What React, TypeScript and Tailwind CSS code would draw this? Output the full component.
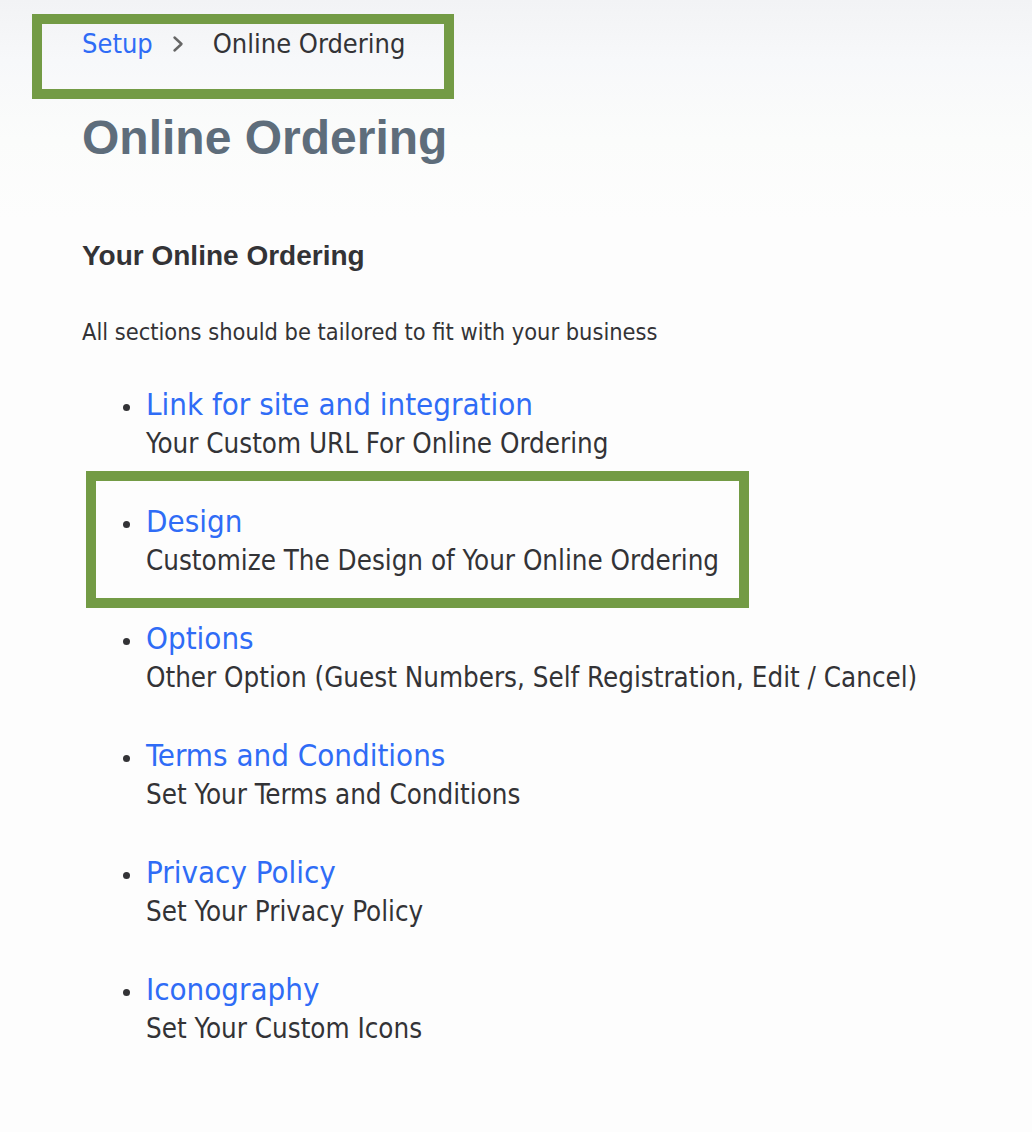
import React from "react";

const items = [
  { title: "Link for site and integration", desc: "Your Custom URL For Online Ordering" },
  { title: "Design", desc: "Customize The Design of Your Online Ordering" },
  { title: "Options", desc: "Other Option (Guest Numbers, Self Registration, Edit / Cancel)" },
  { title: "Terms and Conditions", desc: "Set Your Terms and Conditions" },
  { title: "Privacy Policy", desc: "Set Your Privacy Policy" },
  { title: "Iconography", desc: "Set Your Custom Icons" },
];

const body = { fontFamily: '"DejaVu Sans Condensed", "DejaVu Sans", sans-serif' };
const head = { fontFamily: '"Liberation Sans", Arial, sans-serif' };

export default function App() {
  return (
    <div className="relative min-h-[1132px] w-full bg-[linear-gradient(to_bottom,#f2f3f5_0px,#f7f8fa_60px,#fbfcfb_140px,#fdfdfd_220px,#fdfdfd_100%)] text-[#333336]">
      <div className="pl-[82px] pt-[28px]">
        <nav className="flex h-[32px] items-center text-[27px] leading-[32px]" style={body}>
          <a className="text-[#2f6cf6]">Setup</a>
          <svg className="ml-[19px] mr-[29px]" width="12" height="20" viewBox="0 0 12 20" fill="none">
            <path d="M2.5 3.5l7 6.5-7 6.5" stroke="#666" strokeWidth="2.4" strokeLinecap="round" strokeLinejoin="round" />
          </svg>
          <span className="text-[#333336]">Online Ordering</span>
        </nav>

        <h1 className="mt-[53px] text-[48px] font-bold leading-[49px] text-[#5e6d7b]" style={head}>
          Online Ordering
        </h1>

        <h2 className="mt-[78px] text-[28px] font-bold leading-[32px] text-[#333336]" style={head}>
          Your Online Ordering
        </h2>

        <p className="mt-[45px] text-[23.4px] leading-[30px]" style={body}>
          All sections should be tailored to fit with your business
        </p>

        <ul className="mt-[39px] ml-[40px] flex flex-col gap-[39px]" style={body}>
          {items.map((it) => (
            <li key={it.title} className="flex">
              <span className="flex h-[36px] w-[24px] shrink-0 items-center">
                <span className="ml-[1px] mt-[6px] block h-[7px] w-[7px] rounded-full bg-[#333336]" />
              </span>
              <div className="flex flex-col">
                <a className="text-[31px] leading-[36px] text-[#2f6cf6]">{it.title}</a>
                <span className="text-[27.5px] leading-[42px] text-[#333336]">{it.desc}</span>
              </div>
            </li>
          ))}
        </ul>
      </div>

      <div className="pointer-events-none absolute left-[32px] top-[14px] h-[85px] w-[422px] border-[10px] border-[#739b45]" />
      <div className="pointer-events-none absolute left-[86px] top-[471px] h-[137px] w-[663px] border-[10px] border-[#739b45]" />
    </div>
  );
}
